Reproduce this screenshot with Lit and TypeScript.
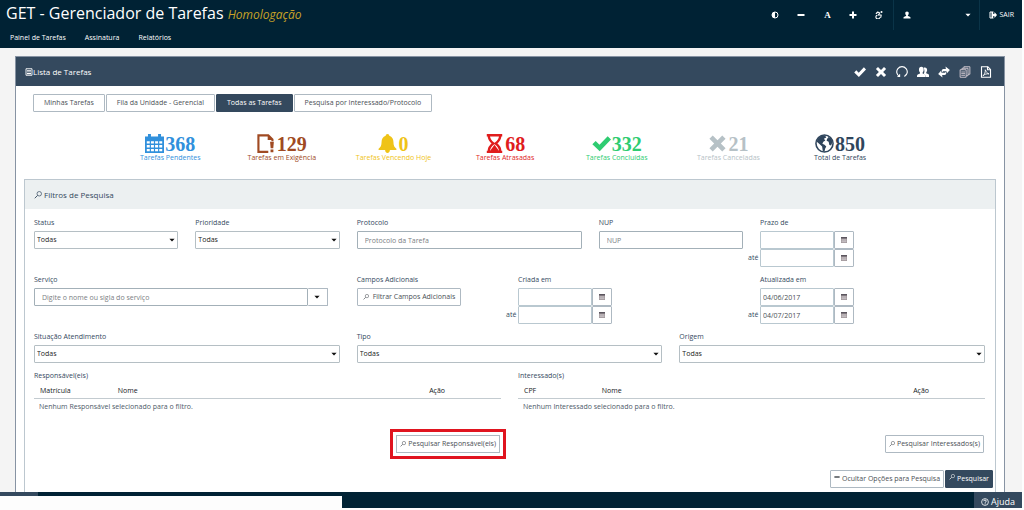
import { LitElement, html, css, svg } from "lit";
import { customElement } from "lit/decorators.js";
import { classMap } from "lit/directives/class-map.js";

const shapes: Record<string, unknown> = {
  contrast: svg`<circle cx="8" cy="8" r="6" fill="none" stroke="currentColor" stroke-width="2"/><path d="M8 2a6 6 0 0 0 0 12z"/>`,
  minus: svg`<path d="M1 6h14v4H1z"/>`,
  plus: svg`<path d="M6 1h4v5h5v4h-5v5H6v-5H1V6h5z"/>`,
  wheelchair: svg`<g fill="none" stroke="currentColor" stroke-width="2.2" stroke-linecap="round" stroke-linejoin="round"><path d="M2.500 5l3-3 4 2-3 4h6l-1 5"/><path d="M4 8.500a4 4 0 1 0 5.500 5"/></g><circle cx="13" cy="2" r="2"/>`,
  user: svg`<path d="M8 1c2.200 0 3.500 1.500 3.500 3.700 0 1.600-.7 3.200-1.700 4v1.500c2.500.9 5.200 1.700 5.200 3.300V15H1v-1.500c0-1.600 2.700-2.400 5.200-3.300V8.700c-1-.8-1.700-2.400-1.700-4C4.500 2.500 5.800 1 8 1z"/>`,
  caret: svg`<path d="M1 4.500h14L8 12z"/>`,
  exit: svg`<path d="M9 2H2v12h7" fill="none" stroke="currentColor" stroke-width="2"/><path d="M5 2h3v12H5z"/><path d="M8 5.500h3V2l5 6-5 6v-3.500H8z"/>`,
  list: svg`<path d="M2 1.500h12v13H2z" fill="none" stroke="currentColor" stroke-width="1.800"/><path d="M4 4h8v1.500H4zM4 7h8v1.500H4zM4 10h8v2.500H4z"/>`,
  check: svg`<path d="M.3 8.600l2.800-2.800 3.200 3.200 6.900-7.200L16 4.600 6.500 14.500z"/>`,
  cross: svg`<path d="M4 1.200l4 4 4-4L14.800 4l-4 4 4 4-2.800 2.800-4-4-4 4L1.200 12l4-4-4-4z"/>`,
  redo: svg`<path d="M4.800 14A7 7 0 1 1 11.200 14M4.800 11v3H2M11.200 14l2-2.500" fill="none" stroke="currentColor" stroke-width="1.500"/>`,
  users: svg`<path d="M10.500 2c1.900 0 3 1.300 3 3.200 0 1.300-.6 2.500-1.200 3.200v1.100c2 .7 3.700 1.300 3.700 2.700V14.500h-4c-.3-2-2-3.300-3.200-3.800.7-1 1.100-2.800 1.100-4.200 0-1.700-.5-3-1.300-3.800.5-.5 1.200-.7 1.900-.7z"/><path d="M5.800 1c2 0 3.100 1.500 3.100 3.700 0 1.600-.6 3.100-1.400 3.900v1.400c2.300.8 4 1.500 4 3.200V14.500H0v-1.300c0-1.700 1.700-2.400 4-3.200V8.600c-.8-.8-1.400-2.300-1.400-3.900C2.600 2.500 3.800 1 5.800 1z"/>`,
  swap: svg`<path d="M10 .8l5.800 4.400L12 9.600 11.200 7H7.500c-1 0-1.500.6-1.700 1.500C4 6 5.500 4 8 4h2.500z"/><path d="M6 15.200L.2 10.800 4 6.400 4.800 9h3.700c1 0 1.500-.6 1.700-1.500C12 10 10.500 12 8 12H5.500z"/>`,
  copies: svg`<g fill="none" stroke="#d9cfd6" stroke-width="1.200"><path d="M1.500 5h8v10h-8zM4 5V3h8v10H9.500M6.500 3V1h8v10H12"/><path d="M3 8h5M3 10.200h5M3 12.400h5"/></g>`,
  pdf: svg`<g fill="none" stroke="currentColor" stroke-width="1.500"><path d="M2 1h8.500L14 4.500V15H2z"/><path d="M10 1v4h4"/><path d="M7 5c1.500 3 2.500 5 5 5.500-3-.5-6 .5-8 2.500C6 11.500 7.500 8 7 5z" stroke-width="1.200"/></g>`,
  calendar: svg`<path d="M0 2h2.500V0H5v2h6V0h2.500v2H16v14H0z"/><g fill="#fff"><path d="M1.500 6H4v2H1.500zM5 6h2.500v2H5zM8.500 6H11v2H8.500zM12 6h2.500v2H12zM1.500 9.300H4v2H1.500zM5 9.300h2.500v2H5zM8.500 9.300H11v2H8.500zM12 9.300h2.500v2H12zM1.500 12.600H4v2H1.500zM5 12.600h2.500v2H5zM8.500 12.600H11v2H8.500zM12 12.600h2.500v2H12z"/></g>`,
  smallcal: svg`<path d="M2 2h12v12H2z" fill="#a39b9e"/><path d="M2 2h12v3H2z" fill="#5b555e"/><path d="M3 8h10M3 11h10M6 6v7M10 6v7" stroke="#dedadd" stroke-width=".8"/>`,
  alertdoc: svg`<path d="M9.500 15H1.200V1.200h8.300L13 4.500V6" fill="none" stroke="currentColor" stroke-width="1.800"/><path d="M9 1v4h4.500z"/><path d="M11 6.500h3.200l-.5 5.500h-2.200zM11.400 13h2.400v2.400h-2.400z"/>`,
  bell: svg`<path d="M8 0c.9 0 1.500.6 1.500 1.400C12 2.100 13 4.300 13 6.700c0 3 .8 4.400 2.500 5.800v1H10c0 1.400-.8 2.400-2 2.400s-2-1-2-2.400H.5v-1C2.200 11.100 3 9.700 3 6.700c0-2.400 1-4.600 3.500-5.300C6.500.6 7.100 0 8 0z"/>`,
  hourglass: svg`<path d="M1.500 1h13M1.500 15h13" stroke="currentColor" stroke-width="2"/><path d="M3.200 1.500c0 3.500 1.800 5 3.800 6.500-2 1.500-3.800 3-3.800 6.500M12.800 1.500c0 3.500-1.800 5-3.800 6.500 2 1.500 3.800 3 3.800 6.500" fill="none" stroke="currentColor" stroke-width="2"/><path d="M8 9l4 5.500H4z"/>`,
  globe: svg`<circle cx="8" cy="8" r="7.200" fill="none" stroke="currentColor" stroke-width="1.300"/><path d="M2 4.500C3.500 2 6 .8 8.500 1.300L9.500 3l-2 1 1.200 1.500L7 6.500l-.8 1.800L8 9l1.500 1.500L8.500 12.500 8 15 6.500 14 6 10.500 3.500 8.200 1.500 6.500z"/><path d="M10.500 2l3 1.500 1.300 3-1.200 3.200-1.500-.5-.6-2.700-1.700-.8.4-1.900 1.200-.4z"/>`,
  search: svg`<circle cx="10.500" cy="5.500" r="4.500" fill="none" stroke="currentColor" stroke-width="1.400"/><path d="M7.200 8.800L1.500 14.500" stroke="currentColor" stroke-width="1.800"/>`,
  help: svg`<circle cx="8" cy="8" r="6.800" fill="none" stroke="currentColor" stroke-width="1.600"/><path d="M5.400 6.300C5.500 4.700 6.600 4 8 4s2.600.8 2.600 2.100c0 1.700-2.300 1.700-2.300 3.400M8.300 10.800v1.800" fill="none" stroke="currentColor" stroke-width="1.900"/>`,
};

const icon = (name: string, size = "") =>
  html`<svg class="icon ${size}" viewBox="0 0 16 16" fill="currentColor" aria-hidden="true">${shapes[name]}</svg>`;

const stats = [
  { icon: "calendar", value: 368, label: "Tarefas Pendentes", tone: "blue" },
  { icon: "alertdoc", value: 129, label: "Tarefas em Exigência", tone: "brown" },
  { icon: "bell", value: 0, label: "Tarefas Vencendo Hoje", tone: "yellow" },
  { icon: "hourglass", value: 68, label: "Tarefas Atrasadas", tone: "red" },
  { icon: "check", value: 332, label: "Tarefas Concluídas", tone: "green" },
  { icon: "cross", value: 21, label: "Tarefas Canceladas", tone: "grey" },
  { icon: "globe", value: 850, label: "Total de Tarefas", tone: "navy" },
];

const tabs = ["Minhas Tarefas", "Fila da Unidade - Gerencial", "Todas as Tarefas", "Pesquisa por Interessado/Protocolo"];

const tools = [
  ["check", "Concluir"],
  ["cross", "Cancelar"],
  ["redo", "Atualizar"],
  ["users", "Responsáveis"],
  ["swap", "Transferir"],
  ["copies", "Copiar"],
  ["pdf", "Gerar PDF"],
];

@customElement("app-root")
export class AppRoot extends LitElement {
  static styles = css`
    :host {
      display: flex;
      flex-direction: column;
      box-sizing: border-box;
      min-height: 100vh;
      padding: 0 2px 2px 0;
      background: #fdfdfd;
      color: #34495e;
      font: 7px/10px "Open Sans", "Noto Sans", sans-serif;
    }
    * { box-sizing: border-box; }
    button, input, select { font: inherit; color: inherit; margin: 0; }
    button { cursor: pointer; white-space: nowrap; }
    a { color: inherit; text-decoration: none; }
    .icon { width: 8px; height: 8px; flex: none; display: block; }
    .icon.tiny { width: 6px; height: 6px; }
    .icon.mid { width: 12px; height: 12px; }
    .icon.big { width: 19px; height: 19px; }

    .top { background: #002234; color: #fff; height: 48px; }
    .brand-row { display: flex; height: 30px; padding-left: 6px; }
    .brand { margin: 0; flex: 1; font-size: 16px; line-height: 26px; font-weight: 400; white-space: nowrap; }
    .stage { font-size: 12px; font-style: italic; color: #c9a227; }
    .utils { display: flex; align-items: center; gap: 12px; padding-right: 7px; }
    .utils button, .tools button { border: 0; padding: 0; background: none; display: grid; place-items: center; }
    .utils button { width: 14px; height: 14px; }
    .utils .letter { font: bold 9px/10px "Liberation Serif", serif; }
    .account, .leave { display: flex; align-items: center; height: 30px; border-left: 1px solid #0a3448; }
    .account { width: 86px; justify-content: space-between; padding: 0 8px 0 9px; }
    .leave { gap: 2px; padding: 0 8px 0 9px; }
    .nav { display: flex; gap: 19px; padding: 3px 10px; }

    .content { flex: 1; display: flex; padding: 8px 17px 0 15px; background: #f4f4f4; }
    .panel { flex: 1; min-width: 0; display: flex; flex-direction: column; background: #fff; border: 1px solid #8793a3; border-bottom: 0; }
    .panel-head { display: flex; align-items: center; height: 29px; padding: 0 12px 0 9px; background: #34495e; color: #fff; }
    .panel-title { display: flex; align-items: center; flex: 1; margin: 0; font-size: 8px; line-height: 10px; font-weight: 400; }
    .tools { display: flex; gap: 9px; }
    .panel-body { flex: 1; display: flex; flex-direction: column; padding: 8px 8px 0; }

    .btn {
      display: inline-flex; align-items: center; justify-content: center; gap: 4px;
      height: 18px; padding: 0 5px; border: 1px solid #aeb9c2; border-radius: 1px; background: #fff; color: #4a4f55;
    }
    .btn.dark { background: #34495e; border-color: #34495e; color: #fff; }
    .tabs { display: flex; gap: 1px; padding-left: 9px; }
    .tabs .btn { padding: 0 10px; }

    .stats { display: grid; grid-template-columns: repeat(7, minmax(0, 1fr)); width: 80.4%; margin: 21px 0 17px 9.3%; }
    .stat { display: flex; flex-direction: column; align-items: center; white-space: nowrap; }
    .figure { display: flex; align-items: flex-end; gap: 1px; height: 20px; font: bold 20px/18px "Liberation Serif", serif; }
    .caption { line-height: 9px; }
    .blue { color: #3090dc; }
    .brown { color: #a04a22; }
    .yellow { color: #efc317; }
    .red { color: #e01d1d; }
    .green { color: #2ecc71; }
    .grey { color: #b6c1c6; }
    .navy { color: #2f455c; }

    .filters { flex: 1; border: 1px solid #bcc7cf; border-bottom: 0; }
    .filters-head { display: flex; align-items: center; gap: 2px; height: 29px; padding: 0 9px; margin: 0; background: #ecf0f1; font-size: 8px; font-weight: 400; }
    .grid { display: grid; grid-template-columns: repeat(12, minmax(0, 1fr)); gap: 8px 17px; padding: 9px 10px 0 9px; }
    .field { display: flex; flex-direction: column; align-items: stretch; gap: 3px; min-width: 0; }
    .c2 { grid-column: span 2; }
    .c3 { grid-column: span 3; }
    .c4 { grid-column: span 4; }
    .c6 { grid-column: span 6; }
    .at7 { grid-column: 7 / span 3; }
    .text { width: 100%; height: 18px; min-width: 0; padding: 0 7px; border: 1px solid #a3b0b8; border-radius: 1px; background: #fff; outline: 0; }
    .text::placeholder { color: #7b8084; opacity: 1; }
    .pick { display: grid; grid-template-columns: 1fr auto; align-items: center; }
    .pick select {
      grid-area: 1 / 1 / 2 / 3; width: 100%; height: 18px; padding: 0 2px; appearance: none;
      border: 1px solid #b5bfc4; border-radius: 1px; background: #fff; color: #222;
    }
    .pick .icon { grid-area: 1 / 2; margin-right: 3px; color: #111; pointer-events: none; }
    .combo { display: flex; padding-right: 12px; }
    .combo .btn { width: 20px; color: #111; border-left: 0; }
    .start { align-self: flex-start; }
    .dates { display: flex; flex-direction: column; }
    .date { display: flex; align-items: center; }
    .date .text { width: 74px; padding: 0 2px; border-color: #b9c8d0; color: #4a4f55; }
    .date .btn { width: 20px; }
    .until { width: 12px; margin-left: -12px; align-self: center; }

    .people { display: flex; flex-direction: column; align-items: stretch; }
    .table { width: 100%; table-layout: fixed; border-collapse: collapse; text-align: left; }
    .table th { height: 17px; padding: 3px 6px 0; border-bottom: 1px solid #c3cbd0; color: #15191d; font-weight: 500; }
    .table .narrow { width: 16.666%; }
    .table td { height: 18px; padding: 0 5px; color: #4c5968; }
    .people .btn, .actions .btn { gap: 2px; padding: 0 3px; }
    .people .btn { align-self: flex-end; margin: 19px 1px 0 0; }
    .people .marked { border-radius: 0; outline: 3px solid #e0141f; outline-offset: 3px; }
    .actions { display: flex; justify-content: flex-end; gap: 1px; padding: 17px 2px 4px; }
    .actions .icon { margin-bottom: 4px; }

    .foot { display: flex; height: 16px; background: #002234; color: #fff; }
    .status { flex: 0 0 342px; padding-top: 4px; background: linear-gradient(90deg, #34495e 38px, #002234 38px); }
    .bubble { height: 12px; background: #fdfdfd; }
    .help { display: flex; align-items: center; gap: 2px; margin-left: auto; padding: 4px 7px 0 7px; background: #34495e; font-size: 9px; }
  `;

  private pick(id: string, label: string, span: string) {
    return html`<div class="field ${span}">
      <label for=${id}>${label}</label>
      <div class="pick"><select id=${id}><option>Todas</option></select>${icon("caret", "tiny")}</div>
    </div>`;
  }

  private dates(id: string, label: string, span: string, from = "", to = "") {
    const openButton = html`<button class="btn" aria-label="Abrir calendário">${icon("smallcal")}</button>`;
    return html`<div class="field ${span}">
      <label for="${id}-de">${label}</label>
      <div class="dates">
        <div class="date"><input class="text" id="${id}-de" .value=${from} />${openButton}</div>
        <div class="date">
          <label class="until" for="${id}-ate">até</label><input class="text" id="${id}-ate" .value=${to} />${openButton}
        </div>
      </div>
    </div>`;
  }

  private people(title: string, key: string, empty: string, action: string, marked: boolean) {
    return html`<section class="people c6">
      <span>${title}</span>
      <table class="table" aria-label=${title}>
        <thead><tr><th class="narrow">${key}</th><th>Nome</th><th class="narrow">Ação</th></tr></thead>
        <tbody><tr><td colspan="3">${empty}</td></tr></tbody>
      </table>
      <button class=${classMap({ btn: true, marked })}>${icon("search", "tiny")}${action}</button>
    </section>`;
  }

  render() {
    return html`
      <header class="top">
        <div class="brand-row">
          <h1 class="brand">GET - Gerenciador de Tarefas <span class="stage">Homologação</span></h1>
          <div class="utils">
            <button aria-label="Contraste">${icon("contrast")}</button>
            <button aria-label="Diminuir fonte">${icon("minus")}</button>
            <button class="letter" aria-label="Fonte normal">A</button>
            <button aria-label="Aumentar fonte">${icon("plus")}</button>
            <button aria-label="Acessibilidade">${icon("wheelchair")}</button>
          </div>
          <div class="account">${icon("user")}${icon("caret", "tiny")}</div>
          <a class="leave" href="#sair">${icon("exit")}SAIR</a>
        </div>
        <nav class="nav">
          <a href="#painel">Painel de Tarefas</a><a href="#assinatura">Assinatura</a><a href="#relatorios">Relatórios</a>
        </nav>
      </header>

      <main class="content">
        <section class="panel">
          <div class="panel-head">
            <h2 class="panel-title">${icon("list")}Lista de Tarefas</h2>
            <div class="tools">
              ${tools.map(([name, label]) => html`<button aria-label=${label}>${icon(name, "mid")}</button>`)}
            </div>
          </div>
          <div class="panel-body">
            <div class="tabs">
              ${tabs.map((tab, i) => html`<button class=${classMap({ btn: true, dark: i === 2 })}>${tab}</button>`)}
            </div>
            <div class="stats">
              ${stats.map(
                (s) => html`<div class="stat ${s.tone}">
                  <span class="figure">${icon(s.icon, "big")}<span>${s.value}</span></span>
                  <span class="caption">${s.label}</span>
                </div>`
              )}
            </div>
            <section class="filters">
              <h3 class="filters-head">${icon("search")}Filtros de Pesquisa</h3>
              <div class="grid">
                ${this.pick("status", "Status", "c2")} ${this.pick("prioridade", "Prioridade", "c2")}
                <div class="field c3">
                  <label for="protocolo">Protocolo</label>
                  <input class="text" id="protocolo" placeholder="Protocolo da Tarefa" />
                </div>
                <div class="field c2">
                  <label for="nup">NUP</label>
                  <input class="text" id="nup" placeholder="NUP" />
                </div>
                ${this.dates("prazo", "Prazo de", "c3")}
                <div class="field c4">
                  <label for="servico">Serviço</label>
                  <div class="combo">
                    <input class="text" id="servico" placeholder="Digite o nome ou sigla do serviço" />
                    <button class="btn" aria-label="Listar serviços">${icon("caret", "tiny")}</button>
                  </div>
                </div>
                <div class="field c2">
                  <label for="campos">Campos Adicionais</label>
                  <button class="btn start" id="campos">${icon("search", "tiny")}Filtrar Campos Adicionais</button>
                </div>
                ${this.dates("criada", "Criada em", "at7")}
                ${this.dates("atualizada", "Atualizada em", "c3", "04/06/2017", "04/07/2017")}
                ${this.pick("situacao", "Situação Atendimento", "c4")} ${this.pick("tipo", "Tipo", "c4")}
                ${this.pick("origem", "Origem", "c4")}
                ${this.people("Responsável(eis)", "Matrícula", "Nenhum Responsável selecionado para o filtro.", "Pesquisar Responsável(eis)", true)}
                ${this.people("Interessado(s)", "CPF", "Nenhum Interessado selecionado para o filtro.", "Pesquisar Interessados(s)", false)}
              </div>
              <div class="actions">
                <button class="btn">${icon("minus", "tiny")}Ocultar Opções para Pesquisa</button>
                <button class="btn dark">${icon("search", "tiny")}Pesquisar</button>
              </div>
            </section>
          </div>
        </section>
      </main>

      <footer class="foot">
        <div class="status"><div class="bubble"></div></div>
        <a class="help" href="#ajuda">${icon("help")}Ajuda</a>
      </footer>
    `;
  }
}
